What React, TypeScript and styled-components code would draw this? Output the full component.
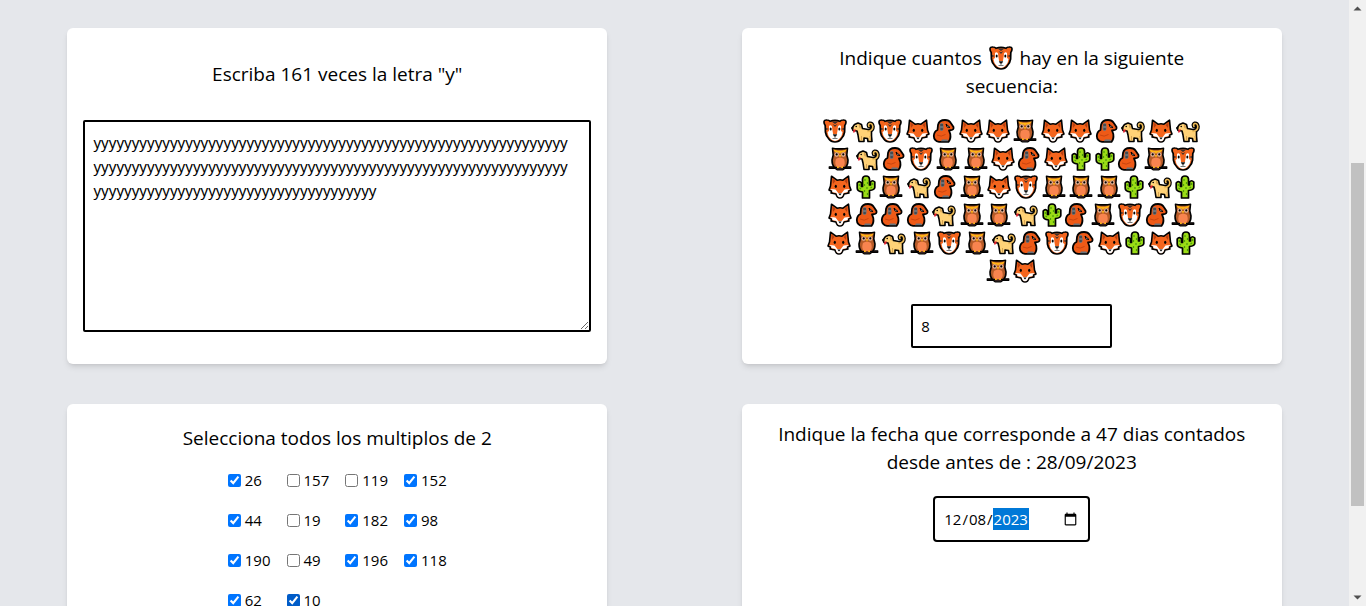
import React from "react";
import styled, { createGlobalStyle, css } from "styled-components";

const GlobalStyle = createGlobalStyle`
  *, *::before, *::after { box-sizing: border-box; }
  body {
    margin: 0;
    background: #e5e7eb;
    color: #000;
    font-family: "Segoe UI", "Open Sans", "Noto Sans", sans-serif;
    font-size: 15px;
    line-height: 24px;
  }
  input, textarea, button { font: inherit; color: inherit; }
`;

const Viewport = styled.div`
  display: flex;
  height: 100vh;
  overflow: hidden;
`;

const Board = styled.main`
  flex: 1;
  display: grid;
  grid-template-columns: 40% 40%;
  grid-auto-rows: max-content;
  justify-content: space-around;
  align-content: start;
  row-gap: 40px;
  padding: 28px 0;
`;

const Card = styled.section<{ $spread?: boolean }>`
  display: flex;
  flex-direction: column;
  align-items: center;
  justify-content: ${(p) => (p.$spread ? "space-around" : "flex-start")};
  min-height: 236px;
  padding: 16px;
  background: #fff;
  border-radius: 6px;
  box-shadow: 0 4px 6px -1px rgba(0, 0, 0, 0.1), 0 2px 4px -2px rgba(0, 0, 0, 0.1);
`;

const Title = styled.h2<{ $narrow?: boolean }>`
  margin: 0;
  max-width: ${(p) => (p.$narrow ? "75%" : "100%")};
  font-size: 19px;
  font-weight: 400;
  line-height: 28px;
  text-align: center;
`;

const fieldBorder = css`
  border: 2px solid #000;
  border-radius: 2px;
  background: #fff;
  outline: none;
`;

const Answer = styled.textarea`
  ${fieldBorder}
  display: block;
  width: 100%;
  height: 212px;
  padding: 8px 20px 8px 8px;
  font-family: "Segoe UI", "Noto Sans", sans-serif;
  word-break: break-all;
`;

const NumberField = styled.input`
  ${fieldBorder}
  width: 201px;
  height: 44px;
  margin-top: 20px;
  padding: 8px;
`;

const DateField = styled.input`
  ${fieldBorder}
  width: 157px;
  height: 46px;
  margin-top: 20px;
  padding: 8px;
  border-radius: 4px;

  &::-webkit-datetime-edit-year-field {
    background: #0078d7;
    color: #fff;
  }
`;

const Sequence = styled.p`
  width: 75%;
  margin: 16px 0 0;
  font-size: 21px;
  line-height: 28px;
  text-align: center;
`;

const Glyph = styled.svg<{ $kind: Kind; $inTitle?: boolean }>`
  display: inline-block;
  width: ${(p) => advance[p.$kind]}px;
  height: 24px;
  margin: ${(p) => (p.$inTitle ? "0 3px" : "0")};
  vertical-align: -5px;
  overflow: visible;
`;

const Options = styled.div`
  display: grid;
  grid-template-columns: repeat(4, auto);
`;

const Option = styled.label`
  display: flex;
  align-items: center;
  gap: 4px;
  padding: 8px;
`;

const Tick = styled.input<{ $hovered?: boolean }>`
  width: 13px;
  height: 13px;
  margin: 0;
  accent-color: ${(p) => (p.$hovered ? "#005cc8" : "#0075ff")};
`;

const ScrollTrack = styled.aside`
  display: flex;
  flex-direction: column;
  align-items: center;
  flex: 0 0 17px;
  background: #f1f1f1;
`;

const ScrollArrow = styled.svg`
  width: 17px;
  height: 17px;
  flex: none;
`;

const ScrollLane = styled.div`
  flex: 1;
  display: grid;
  grid-template-rows: 146fr 343fr 83fr;
`;

const ScrollThumb = styled.div`
  grid-row: 2;
  width: 13px;
  background: #c1c1c1;
`;

type Kind = "tiger" | "dog" | "fox" | "ape" | "owl" | "cactus";

const advance: Record<Kind, number> = { tiger: 22, dog: 22, fox: 22, ape: 20, owl: 22, cactus: 18 };

const drawings: Record<Kind, React.ReactNode> = {
  tiger: (
    <>
      <path d="M1 3Q1 .8 4 1Q6 1 7 2.2Q12 .6 17 2.2Q18 1 20 1Q23 .8 23 3Q23 5 21.8 6.5L21.6 13Q21 17 18.5 19.5Q16 23 12 23Q8 23 5.5 19.5Q3 17 2.4 13L2.2 6.5Q1 5 1 3Z" fill="#f4651d" stroke="#000" strokeWidth="1.7" />
      <path d="M6 7Q7.5 5.5 9 7.5L10 14H14L15 7.5Q16.5 5.5 18 7L18 12L19.5 13Q19 17 17 19Q15 22 12 22Q9 22 7 19Q5 17 4.5 13L6 12Z" fill="#fff" />
      <path d="M9.5 7H14.5L14 15H10Z" fill="#f4651d" />
      <path d="M8.5 2.5H15.5L12 5ZM9.5 5L12 6.2L14.5 5L12 8ZM3 9L6 10L3 11ZM21 9L18 10L21 11Z" fill="#3b302c" />
      <ellipse cx="7.7" cy="10" rx="1" ry="1.5" />
      <ellipse cx="16.3" cy="10" rx="1" ry="1.5" />
      <path d="M9.8 15.3H14.2L13 17.5H11Z" fill="#111" />
      <path d="M12 17V19M9.5 19.5H14.5" stroke="#555" strokeWidth=".8" />
    </>
  ),
  dog: (
    <>
      <path d="M17 12.5Q22 11.5 21.8 7.5Q21.2 4 18.7 4.5Q16.8 5.5 18 7.5" fill="none" stroke="#000" strokeWidth="4" strokeLinecap="round" />
      <path d="M3.5 5.5L7 4L10.5 5.5L11.5 9.5L17 10.5L20.5 12V17L21 22.5H17L16.5 19.5L13 19V22.5H8L7 16L6 12L2 11.5L1 9Z" fill="#ffd277" stroke="#000" strokeWidth="1.6" strokeLinejoin="round" />
      <path d="M17 12.5Q22 11.5 21.8 7.5Q21.2 4 18.7 4.5Q16.8 5.5 18 7.5" fill="none" stroke="#f0bd58" strokeWidth="1.6" strokeLinecap="round" />
      <path d="M8 5.5L10 6.5L9.7 9.5Q7.5 9.5 8 5.5Z" fill="#d7a352" />
      <circle cx="5.2" cy="7.5" r=".8" />
      <path d="M.5 8H2.5V10H.5Z" />
      <path d="M2.5 10.5H5L3.5 13.5H2Z" fill="#e52030" />
      <path d="M10.5 17V21M19 17L19.5 21" stroke="#d7a352" />
    </>
  ),
  fox: (
    <>
      <path d="M3.5 1.2L9 5.2Q12 4.2 15 5.2L20.5 1.2L21.5 11L23 15L20 16.5L21 18L16 19Q15 23 12 23Q9 23 8 19L3 18L4 16.5L1 15L2.5 11Z" fill="#f4651d" stroke="#000" strokeWidth="1.6" strokeLinejoin="round" />
      <path d="M2.2 14L7.5 14.5L10.2 18H13.8L16.5 14.5L21.8 14L19.5 15.8L20 17L15.5 18Q14.7 22.2 12 22.2Q9.3 22.2 8.5 18L4 17L4.5 15.8Z" fill="#fff" />
      <path d="M4.3 3.2L7.5 6L5 9ZM19.7 3.2L16.5 6L19 9Z" fill="#b84012" />
      <ellipse cx="7.8" cy="11.3" rx="1.1" ry="1.6" />
      <ellipse cx="16.2" cy="11.3" rx="1.1" ry="1.6" />
      <path d="M10.3 18.5H13.7L12 20.5Z" />
    </>
  ),
  ape: (
    <>
      <path d="M6 6Q7 1 13 1Q17 1 18.5 3.5L21.5 8Q22 11 19 11.2L17 11.5L18.3 15Q19 20 16.5 22.8H7Q2 22 1.8 17Q2 12.5 5.5 11Z" fill="#ee5a17" stroke="#000" strokeWidth="1.8" strokeLinejoin="round" />
      <path d="M14 5L18 8.5L15 8Z" fill="#fff" stroke="#000" strokeWidth="1" />
      <path d="M8 5Q9.8 3.2 11.3 5L11.6 10Q10.8 12.5 9 12Q7.5 11.5 7.5 9Z" fill="#68727a" />
      <path d="M8.3 6H11M8.5 10H10.8" stroke="#222" strokeWidth="1" />
      <path d="M5 16Q9 18.5 13.5 15.5" fill="none" stroke="#c94510" strokeWidth="1" />
      <path d="M10 20.5H15.5L16 22.2H9Z" fill="#68727a" />
    </>
  ),
  owl: (
    <>
      <path d="M1.2 19.8H22.8V21.3H17L15 22.8H9L7 21.3H1.2Z" fill="#4b2c29" stroke="#000" strokeWidth="1.2" strokeLinejoin="round" />
      <path d="M4.5 1.2Q8 2.2 12 1.8Q16 2.2 19.5 1.2L18.8 8L20 13Q20 18 17.5 20.5H6.5Q4 18 4 13L5.2 8Z" fill="#b65b28" stroke="#000" strokeWidth="1.6" strokeLinejoin="round" />
      <path d="M8 12Q12 9.5 16 12Q18 18 14.5 20.5H9.5Q6 18 8 12Z" fill="#f9844f" />
      <path d="M5.3 2.5L10 3.8H14L18.7 2.5L17 5L13 5.8L12 7L11 5.8L7 5Z" fill="#ffb514" />
      <circle cx="8.7" cy="7.5" r="2.2" fill="#e9b89c" />
      <circle cx="15.3" cy="7.5" r="2.2" fill="#e9b89c" />
      <circle cx="8.7" cy="7.4" r="1.1" />
      <circle cx="15.3" cy="7.4" r="1.1" />
      <path d="M10.8 8H13.2L12 11Z" fill="#ffb514" />
      <path d="M9 20.2H10.8M13.2 20.2H15" stroke="#ffb514" strokeWidth="1.5" />
    </>
  ),
  cactus: (
    <>
      <path d="M8.5 4Q8.7 1 12 1Q15.3 1 15.5 4V10H16.5V7Q18.5 4.5 20.8 7V12.5Q20.5 15 15.5 15.5V23H8.5V17Q3.2 16.5 3.2 13V8Q5.3 5.3 7.5 8V11.5H8.5Z" fill="#9bdc16" stroke="#000" strokeWidth="1.7" strokeLinejoin="round" />
      <path d="M11 4V6M13.5 7V9M10.5 9V11M13 12V14M10.5 15V17M13.5 18V20M5.3 9V11M5.5 13L7 14M18.6 8V10M18 12L16.5 13" stroke="#4c9c0b" strokeWidth="1.2" />
    </>
  ),
};

const codes: Record<string, Kind> = { T: "tiger", D: "dog", F: "fox", M: "ape", O: "owl", C: "cactus" };

const sequence = ["TDTFMFFOFFMDFD", "ODMTOOFMFCCMOT", "FCODMOFTOOOCDC", "FMMMDOODCMOTMO", "FODOTODMTMFCFC", "OF"]
  .join("")
  .split("");

const options = [
  { value: 26, checked: true },
  { value: 157 },
  { value: 119 },
  { value: 152, checked: true },
  { value: 44, checked: true },
  { value: 19 },
  { value: 182, checked: true },
  { value: 98, checked: true },
  { value: 190, checked: true },
  { value: 49 },
  { value: 196, checked: true },
  { value: 118, checked: true },
  { value: 62, checked: true },
  { value: 10, checked: true, hovered: true },
];

function Emoji({ kind, inTitle }: { kind: Kind; inTitle?: boolean }) {
  return (
    <Glyph $kind={kind} $inTitle={inTitle} viewBox="0 0 24 24" preserveAspectRatio="xMidYMid slice" aria-hidden="true">
      {drawings[kind]}
    </Glyph>
  );
}

export default function App() {
  return (
    <>
      <GlobalStyle />
      <Viewport>
        <Board>
          <Card $spread>
            <Title as="label" htmlFor="letters">Escriba 161 veces la letra "y"</Title>
            <Answer id="letters" spellCheck={false} defaultValue={"y".repeat(161)} />
          </Card>

          <Card>
            <Title as="label" htmlFor="count" $narrow>
              Indique cuantos <Emoji kind="tiger" inTitle />
              {" hay en la siguiente "}
              {"secuencia:"}
            </Title>
            <Sequence>
              {sequence.map((code, i) => (
                <React.Fragment key={i}>
                  <Emoji kind={codes[code]} />{" "}
                </React.Fragment>
              ))}
            </Sequence>
            <NumberField id="count" type="text" inputMode="numeric" defaultValue="8" />
          </Card>

          <Card $spread>
            <Title>Selecciona todos los multiplos de 2</Title>
            <Options>
              {options.map((o) => (
                <Option key={o.value}>
                  <Tick type="checkbox" defaultChecked={o.checked} $hovered={o.hovered} />
                  {o.value}
                </Option>
              ))}
            </Options>
          </Card>

          <Card>
            <Title as="label" htmlFor="date">
              Indique la fecha que corresponde a 47 dias contados desde antes de : 28/09/2023
            </Title>
            <DateField id="date" type="date" defaultValue="2023-12-08" />
          </Card>
        </Board>

        <ScrollTrack aria-hidden="true">
          <ScrollArrow viewBox="0 0 17 17">
            <path d="M8.5 6.5L12.5 10.5H4.5Z" fill="#505050" />
          </ScrollArrow>
          <ScrollLane>
            <ScrollThumb />
          </ScrollLane>
          <ScrollArrow viewBox="0 0 17 17">
            <path d="M8.5 10.5L12.5 6.5H4.5Z" fill="#505050" />
          </ScrollArrow>
        </ScrollTrack>
      </Viewport>
    </>
  );
}
